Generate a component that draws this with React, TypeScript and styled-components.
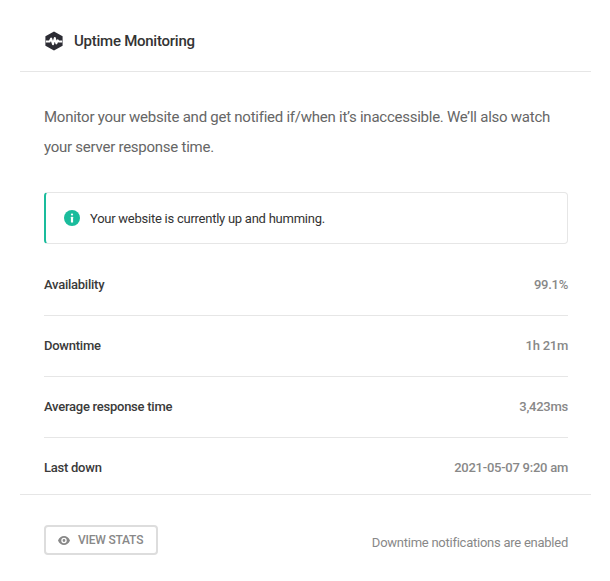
import React from "react";
import styled, { createGlobalStyle } from "styled-components";

const Global = createGlobalStyle`
  html, body { margin: 0; padding: 0; background: #fff; }
  body { font-family: Roboto, "Liberation Sans", sans-serif; letter-spacing: -0.25px; }
`;

const Page = styled.div`
  width: 610px;
  height: 581px;
  padding: 10px 19px 0 20px;
  box-sizing: border-box;
  overflow: hidden;
`;

const Header = styled.header`
  display: flex;
  align-items: center;
  gap: 10px;
  height: 61px;
  padding: 0 24px;
  border-bottom: 1px solid #e6e6e6;
`;

const Title = styled.h3`
  margin: 0;
  font-size: 15px;
  line-height: 22px;
  font-weight: 500;
  color: #333;
`;

const Body = styled.section`
  padding: 30px 23px 0 24px;
`;

const Intro = styled.p`
  margin: 0 0 30px;
  font-size: 15px;
  line-height: 30px;
  color: #666;
`;

const Notice = styled.div`
  display: flex;
  align-items: center;
  gap: 10px;
  height: 52px;
  box-sizing: border-box;
  padding: 0 18px;
  border: 1px solid #e6e6e6;
  border-left: 2px solid #1abc9c;
  border-radius: 4px;
  font-size: 13px;
  color: #333;
`;

const Stats = styled.div`
  padding-top: 11px;
`;

const Row = styled.div`
  display: flex;
  justify-content: space-between;
  align-items: center;
  height: 61px;
  padding-bottom: 2px;
  box-sizing: border-box;
  border-bottom: 1px solid #e6e6e6;
  &:last-child { border-bottom: 0; height: 56px; padding: 2px 0 0; }
`;

const Label = styled.span`
  font-size: 13px;
  font-weight: 500;
  color: #3a3a3a;
`;

const Value = styled.span`
  font-size: 13px;
  font-weight: 500;
  color: #888;
`;

const Footer = styled.footer`
  display: flex;
  justify-content: space-between;
  align-items: center;
  border-top: 1px solid #e6e6e6;
  padding: 30px 23px 0 24px;
`;

const Button = styled.button`
  display: flex;
  align-items: center;
  gap: 8px;
  height: 30px;
  width: 114px;
  box-sizing: border-box;
  padding: 0 0 0 12px;
  border: 2px solid #ddd;
  border-radius: 4px;
  background: #fff;
  font-family: inherit;
  font-size: 12px;
  font-weight: 500;
  letter-spacing: -0.2px;
  color: #888;
`;

const Hint = styled.span`
  font-size: 13px;
  color: #888;
  padding-top: 4px;
`;

const Logo = () => (
  <svg width="20" height="20" viewBox="0 0 20 20">
    <path d="M10 .4 18.6 5.2V14.8L10 19.6 1.4 14.8V5.2Z" fill="#2c2c34" />
    <path
      d="M1.8 10.5H5.6L7.2 7.6 9 13.2 10.8 7 12.4 12.4 13.8 9.4 14.6 10.5H18.2"
      fill="none"
      stroke="#fff"
      strokeWidth="2"
      strokeLinejoin="round"
    />
  </svg>
);

const InfoIcon = () => (
  <svg width="16" height="16" viewBox="0 0 16 16">
    <circle cx="8" cy="8" r="8" fill="#1abc9c" />
    <rect x="6.9" y="3.4" width="2.2" height="2.2" rx="1" fill="#fff" />
    <rect x="6.9" y="6.8" width="2.2" height="5.8" rx=".5" fill="#fff" />
  </svg>
);

const EyeIcon = () => (
  <svg width="12" height="9" viewBox="0 0 12 9">
    <path
      d="M6 0C3.4 0 1.2 1.7 0 4.5 1.2 7.3 3.4 9 6 9s4.8-1.7 6-4.5C10.8 1.7 8.6 0 6 0Zm0 7.2a2.7 2.7 0 1 1 0-5.4 2.7 2.7 0 0 1 0 5.4Zm0-1.3a1.4 1.4 0 1 0 0-2.8 1.4 1.4 0 0 0 0 2.8Z"
      fill="#888"
    />
  </svg>
);

const stats: [string, string][] = [
  ["Availability", "99.1%"],
  ["Downtime", "1h 21m"],
  ["Average response time", "3,423ms"],
  ["Last down", "2021-05-07 9:20 am"],
];

export default function App() {
  return (
    <Page>
      <Global />
      <Header>
        <Logo />
        <Title>Uptime Monitoring</Title>
      </Header>
      <Body>
        <Intro>
          Monitor your website and get notified if/when it’s inaccessible. We’ll also watch your server response time.
        </Intro>
        <Notice>
          <InfoIcon />
          Your website is currently up and humming.
        </Notice>
        <Stats>
          {stats.map(([l, v]) => (
            <Row key={l}>
              <Label>{l}</Label>
              <Value>{v}</Value>
            </Row>
          ))}
        </Stats>
      </Body>
      <Footer>
        <Button>
          <EyeIcon />
          VIEW STATS
        </Button>
        <Hint>Downtime notifications are enabled</Hint>
      </Footer>
    </Page>
  );
}
